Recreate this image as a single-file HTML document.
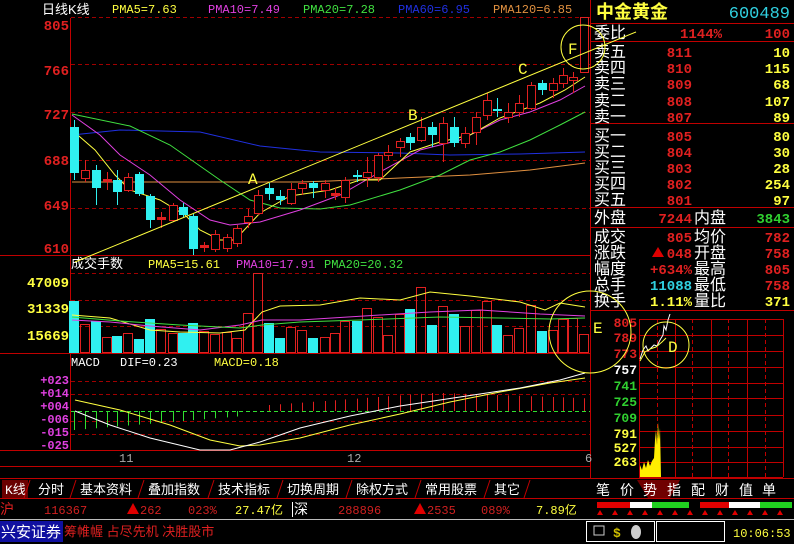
<!DOCTYPE html>
<html><head><meta charset="utf-8">
<style>
html,body{margin:0;padding:0;background:#000;}
body{width:794px;height:544px;overflow:hidden;position:relative;}
svg{position:absolute;left:0;top:0;}
text{font-family:"Liberation Mono","Noto Sans CJK SC",monospace;}
.cn{font-family:"Liberation Sans","Noto Sans CJK SC",sans-serif;}
</style></head><body>
<svg id="s" width="794" height="544" viewBox="0 0 794 544" xmlns="http://www.w3.org/2000/svg">
<rect width="794" height="544" fill="#000"/>
<g stroke="#c00000" stroke-width="1" fill="none">
<line x1="70.5" y1="18" x2="70.5" y2="451"/>
<line x1="590.5" y1="0" x2="590.5" y2="478"/>
<line x1="0" y1="255.5" x2="590" y2="255.5"/>
<line x1="0" y1="353.5" x2="590" y2="353.5"/>
<line x1="0" y1="450.5" x2="590" y2="450.5"/>
<line x1="0" y1="466.5" x2="590" y2="466.5"/>
<line x1="0" y1="478.5" x2="794" y2="478.5"/>
<line x1="0" y1="498.5" x2="794" y2="498.5"/>
</g>
<g stroke="#a00000" stroke-dasharray="4,3" stroke-width="1">
<line x1="71" y1="17.5" x2="590" y2="17.5"/>
<line x1="71" y1="64.5" x2="590" y2="64.5"/>
<line x1="71" y1="112.5" x2="590" y2="112.5"/>
<line x1="71" y1="160.5" x2="590" y2="160.5"/>
<line x1="71" y1="208.5" x2="590" y2="208.5"/>
<line x1="71" y1="273.5" x2="590" y2="273.5"/>
<line x1="71" y1="300.5" x2="590" y2="300.5"/>
<line x1="71" y1="326.5" x2="590" y2="326.5"/>
<line x1="71" y1="381.5" x2="590" y2="381.5"/>
<line x1="71" y1="394.5" x2="590" y2="394.5"/>
<line x1="71" y1="421.5" x2="590" y2="421.5"/>
<line x1="71" y1="434.5" x2="590" y2="434.5"/>
</g>
<line x1="71" y1="411.5" x2="590" y2="411.5" stroke="#30e030" stroke-dasharray="4,3"/>
<text x="42" y="14" fill="#fff" font-size="13" class="cn">日线K线</text>
<text x="112" y="13" fill="#ffff40" font-size="12">PMA5=7.63</text>
<text x="208" y="13" fill="#e040e0" font-size="12">PMA10=7.49</text>
<text x="303" y="13" fill="#40e040" font-size="12">PMA20=7.28</text>
<text x="398" y="13" fill="#2030e0" font-size="12">PMA60=6.95</text>
<text x="493" y="13" fill="#e09040" font-size="12">PMA120=6.85</text>
<g fill="#e02020" font-size="14" font-weight="bold" text-anchor="end">
<text x="69" y="30">805</text><text x="69" y="75">766</text><text x="69" y="119">727</text>
<text x="69" y="165">688</text><text x="69" y="210">649</text><text x="69" y="253">610</text>
</g>
<g id="main"></g>
<text x="71" y="268" fill="#fff" font-size="13" class="cn">成交手数</text>
<text x="148" y="268" fill="#ffff40" font-size="12">PMA5=15.61</text>
<text x="236" y="268" fill="#e040e0" font-size="12">PMA10=17.91</text>
<text x="324" y="268" fill="#40e040" font-size="12">PMA20=20.32</text>
<g fill="#ffff40" font-size="14" font-weight="bold" text-anchor="end">
<text x="69" y="287">47009</text><text x="69" y="313">31339</text><text x="69" y="340">15669</text>
</g>
<text x="71" y="366" fill="#fff" font-size="12">MACD</text>
<text x="120" y="366" fill="#fff" font-size="12">DIF=0.23</text>
<text x="214" y="366" fill="#ffff40" font-size="12">MACD=0.18</text>
<g fill="#e040e0" font-size="12" font-weight="bold" text-anchor="end">
<text x="69" y="384">+023</text><text x="69" y="397">+014</text><text x="69" y="410">+004</text>
<text x="69" y="423">-006</text><text x="69" y="436">-015</text><text x="69" y="449">-025</text>
</g>
<text x="119" y="462" fill="#aaa" font-size="12">11</text>
<text x="347" y="462" fill="#aaa" font-size="12">12</text>
<text x="585" y="462" fill="#aaa" font-size="12">6</text>

<g stroke="#c00000" fill="none">
<line x1="590" y1="23.5" x2="794" y2="23.5"/><line x1="590" y1="41.5" x2="794" y2="41.5"/>
<line x1="590" y1="123.5" x2="794" y2="123.5"/><line x1="590" y1="207.5" x2="794" y2="207.5"/>
<line x1="590" y1="227.5" x2="794" y2="227.5"/><line x1="590" y1="310.5" x2="794" y2="310.5"/>
</g>
<text x="596" y="18" fill="#ffff40" font-size="18" font-weight="bold" class="cn">中金黄金</text>
<text x="790" y="18" fill="#30d0e0" font-size="17" text-anchor="end">600489</text>
<g id="rp" class="cn"></g>
<g stroke="#c00000" fill="none" id="mini"></g>
<g font-size="13" font-weight="bold" text-anchor="end">
<text x="637" y="327" fill="#e02020">805</text><text x="637" y="342" fill="#e02020">789</text><text x="637" y="358" fill="#e02020">773</text>
<text x="637" y="374" fill="#fff">757</text><text x="637" y="390" fill="#30d030">741</text><text x="637" y="406" fill="#30d030">725</text><text x="637" y="422" fill="#30d030">709</text>
<text x="637" y="438" fill="#ffff40">791</text><text x="637" y="452" fill="#ffff40">527</text><text x="637" y="466" fill="#ffff40">263</text>
</g>
<polyline fill="none" stroke="#fff" points="640,359 643,350 646,346 648,351 651,348 654,345 657,346 660,340 663,335 664,326 666,330 668,320 670,314" />
<polyline fill="none" stroke="#ffff40" points="640,361 645,352 650,349 656,347 662,342 666,338" />
<path fill="#ffee00" d="M640,477 L640,465 642,470 644,462 646,468 648,460 650,466 652,461 654,458 655,440 656,430 657,445 658,422 659,440 660,428 661,477 Z"/>
<g fill="none" stroke="#ffff40">
<circle cx="583" cy="47" r="22"/><circle cx="590" cy="332" r="41"/><circle cx="666" cy="345" r="23"/>
</g>
<line x1="75" y1="262" x2="636" y2="32" stroke="#ffff40"/>
<g fill="#ffff40" font-size="16" font-family="Liberation Serif,serif">
<text x="248" y="184">A</text><text x="408" y="120">B</text><text x="518" y="74">C</text>
<text x="568" y="54">F</text><text x="593" y="333">E</text><text x="668" y="352">D</text>
</g>
<rect x="2" y="480" width="26" height="18" fill="#6a0000"/>
<g fill="#fff" font-size="13" class="cn">
<text x="5" y="494">K线</text><text x="38" y="494">分时</text><text x="80" y="494">基本资料</text><text x="148" y="494">叠加指数</text>
<text x="218" y="494">技术指标</text><text x="287" y="494">切换周期</text><text x="356" y="494">除权方式</text><text x="425" y="494">常用股票</text><text x="494" y="494">其它</text>
</g>
<g stroke="#c00000"><line x1="30" y1="480" x2="24" y2="498"/><line x1="76" y1="480" x2="70" y2="498"/><line x1="144" y1="480" x2="138" y2="498"/><line x1="214" y1="480" x2="208" y2="498"/><line x1="283" y1="480" x2="277" y2="498"/><line x1="352" y1="480" x2="346" y2="498"/><line x1="421" y1="480" x2="415" y2="498"/><line x1="490" y1="480" x2="484" y2="498"/><line x1="530" y1="480" x2="524" y2="498"/></g>
<path d="M637,480 L648,498 L670,498 L680,480Z" fill="#700000"/>
<g fill="#fff" font-size="14" class="cn">
<text x="596" y="495">笔</text><text x="620" y="495">价</text><text x="643" y="495">势</text><text x="667" y="495">指</text><text x="691" y="495">配</text><text x="715" y="495">财</text><text x="739" y="495">值</text><text x="762" y="495">单</text>
</g>
<text x="0" y="514" fill="#e02020" font-size="14" class="cn">沪</text>
<text x="44" y="514" fill="#d02020" font-size="12">116367</text>
<path d="M127,514 L133,503 L139,514Z" fill="#e00000"/>
<text x="140" y="514" fill="#d02020" font-size="12">262</text>
<text x="188" y="514" fill="#d02020" font-size="12">023%</text>
<text x="235" y="514" fill="#ffff40" font-size="12">27.47亿</text>
<line x1="292.5" y1="502" x2="292.5" y2="517" stroke="#fff"/>
<text x="294" y="514" fill="#fff" font-size="14" class="cn">深</text>
<text x="338" y="514" fill="#d02020" font-size="12">288896</text>
<path d="M414,514 L420,503 L426,514Z" fill="#e00000"/>
<text x="427" y="514" fill="#d02020" font-size="12">2535</text>
<text x="481" y="514" fill="#d02020" font-size="12">089%</text>
<text x="536" y="514" fill="#ffff40" font-size="12">7.89亿</text>
<rect x="597" y="502" width="92" height="6" fill="#fff"/><rect x="597" y="502" width="33" height="6" fill="#e00000"/><rect x="652" y="502" width="37" height="6" fill="#20d020"/>
<rect x="700" y="502" width="92" height="6" fill="#fff"/><rect x="700" y="502" width="29" height="6" fill="#e00000"/><rect x="760" y="502" width="32" height="6" fill="#20d020"/>
<g fill="#e00000" id="tri"></g>
<line x1="0" y1="519.5" x2="794" y2="519.5" stroke="#bbb"/>
<rect x="0" y="521" width="63" height="21" fill="#1010a0"/>
<text x="1" y="537" fill="#fff" font-size="15" class="cn">兴安证券</text>
<text x="64" y="536" fill="#e02020" font-size="13" class="cn">筹帷幄 占尽先机 决胜股市</text>
<rect x="586.5" y="521.5" width="68" height="20" fill="none" stroke="#fff"/>
<line x1="654.5" y1="521" x2="654.5" y2="542" stroke="#fff"/>
<rect x="656.5" y="521.5" width="68" height="20" fill="none" stroke="#fff"/>
<rect x="594" y="526" width="10" height="9" fill="none" stroke="#ccc"/>
<text x="613" y="537" fill="#d0c000" font-size="13" font-weight="bold">$</text>
<ellipse cx="636" cy="532" rx="5" ry="7" fill="#ccc"/>
<text x="733" y="537" fill="#ffff40" font-size="12">10:06:53</text>
</svg>
<script>
var NS="http://www.w3.org/2000/svg";
function el(p,t,a){var e=document.createElementNS(NS,t);for(var k in a)e.setAttribute(k,a[k]);p.appendChild(e);return e;}
var m=document.getElementById('main');
function pl(pts,c){el(m,'polyline',{points:pts,fill:'none',stroke:c,'stroke-width':1});}
pl("72,135 120,130 200,132 260,146 320,152 400,153 450,155 520,154 585,152","#2030e0");
pl("72,182 300,182 330,181 400,178 470,175 530,170 585,163","#e09040");
pl("72,114 130,126 170,145 220,180 250,200 280,208 320,209 350,205 400,190 440,175 470,160 500,152 530,140 560,125 585,112","#40e040");
pl("72,115 100,135 120,155 150,175 180,200 210,220 230,225 260,222 300,210 340,195 380,172 420,150 460,140 500,120 530,112 560,100 585,86","#e040e0");
pl("72,130 95,150 115,175 130,190 160,200 185,215 200,230 220,240 235,240 260,213 290,196 330,190 360,180 380,180 410,152 440,142 470,135 500,118 540,103 565,90 585,77","#ffff40");
var C=[[74,127,173,120,180,0],[85,170,178,160,182,1],[96,170,188,165,205,0],[107,179,181,172,190,1],[117,180,192,170,205,0],[128,177,190,173,192,1],[139,174,194,172,196,0],[150,196,220,194,228,0],[161,217,219,212,228,1],[173,205,220,203,222,1],[183,207,215,203,217,0],[193,216,249,214,255,0],[204,245,247,242,252,1],[215,234,249,230,252,1],[227,237,248,234,252,1],[237,228,243,225,247,1],[248,216,222,209,228,1],[258,195,213,190,215,1],[269,188,194,183,200,0],[280,196,200,190,205,0],[291,189,203,183,205,1],[302,183,188,180,195,1],[313,183,188,181,198,0],[325,183,190,180,198,1],[335,193,195,188,200,1],[345,180,197,177,203,1],[357,175,177,170,182,0],[367,172,177,157,187,1],[378,155,177,153,182,1],[388,152,155,145,160,1],[400,141,147,138,157,1],[410,137,143,133,150,0],[421,127,140,117,142,1],[432,127,135,122,147,0],[443,123,143,117,162,1],[454,127,143,117,147,0],[465,133,143,127,148,1],[476,117,132,112,145,1],[487,100,115,93,120,1],[497,109,111,98,117,0],[508,112,117,103,123,1],[519,103,112,95,117,1],[531,85,108,82,110,1],[542,83,90,80,95,0],[553,83,90,78,98,1],[563,75,83,68,88,1],[573,77,80,72,93,1],[584,17,72,17,72,1]];
C.forEach(function(c){var x=c[0],col=c[5]?'#e02020':'#30f0f0';
el(m,'line',{x1:x+.5,y1:c[3],x2:x+.5,y2:c[4],stroke:col});
if(c[5])el(m,'rect',{x:x-3.5,y:c[1]+.5,width:8,height:Math.max(1,c[2]-c[1]),fill:c[2]-c[1]<3?col:'#000',stroke:col});
else el(m,'rect',{x:x-4,y:c[1],width:9,height:Math.max(2,c[2]-c[1]),fill:col});});
var V=[301,324,321,337,336,333,339,319,329,333,333,323,331,334,332,338,313,273,323,338,327,330,338,337,333,321,321,308,317,335,314,309,287,325,306,314,326,310,301,325,335,328,305,331,330,319,318,334];
V.forEach(function(v,i){var x=C[i][0],up=C[i][5];
if(up)el(m,'rect',{x:x-4.5,y:v+.5,width:9,height:352-v,fill:'none',stroke:'#e02020'});
else el(m,'rect',{x:x-5,y:v,width:10,height:353-v,fill:'#30f0f0'});});
pl("72,315 110,318 150,330 180,332 220,333 245,330 262,312 280,306 320,305 360,298 400,300 430,292 470,296 520,302 545,310 560,303 585,307","#ffff40");
pl("72,320 110,322 150,326 200,330 240,325 262,320 300,320 380,315 430,312 480,310 540,314 585,316","#e040e0");
pl("72,317 120,321 180,325 240,328 262,325 300,322 360,320 440,317 500,318 550,319 585,318","#40e040");
C.forEach(function(c,i){var x=c[0]+.5;
if(i<16){var h=19-i*0.9;el(m,'line',{x1:x,y1:411,x2:x,y2:411+h,stroke:'#30e030'});}
else if(i>17){var h2=Math.min(18,6+(i-18)*0.8);if(i>34)h2=18-(i-34)*0.4;el(m,'line',{x1:x,y1:411,x2:x,y2:411-h2,stroke:'#e02020'});}});
pl("75,400 120,410 170,425 210,440 240,446 260,445 300,438 350,425 400,414 450,402 500,392 550,383 585,378","#ffff40");
pl("75,411 110,425 150,438 200,450 230,450 260,442 300,428 350,416 400,406 460,397 520,388 560,380 585,373","#fff");
var rp=document.getElementById('rp');
function t(x,y,s,c,a,f,b){var e=el(rp,'text',{x:x,y:y,fill:c,'text-anchor':a||'start','font-size':f||16});if(b){e.setAttribute('font-weight','bold');e.setAttribute('style','font-family:"Liberation Mono",monospace');}e.textContent=s;}
t(594,38,'委比','#fff');t(680,38,'1144%','#e02020','start',14,1);t(790,38,'100','#e02020','end',14,1);
var sl=[['卖五',811,10],['卖四',810,115],['卖三',809,68],['卖二',808,107],['卖一',807,89],['买一',805,80],['买二',804,30],['买三',803,28],['买四',802,254],['买五',801,97]];
var ys=[57,73,89,106,122,141,157,173,189,205];
sl.forEach(function(r,i){t(594,ys[i],r[0],'#fff');t(692,ys[i],r[1],'#e02020','end',14,1);t(790,ys[i],r[2],'#ffff40','end',14,1);});
t(594,223,'外盘','#fff');t(692,223,'7244','#e02020','end',14,1);t(694,223,'内盘','#fff');t(790,223,'3843','#30d030','end',14,1);
var rr=[['成交','805','#e02020','均价','782','#e02020'],['涨跌','048','#e02020','开盘','758','#e02020'],['幅度','+634%','#e02020','最高','805','#e02020'],['总手','11088','#30d0e0','最低','758','#e02020'],['换手','1.11%','#ffff40','量比','371','#ffff40']];
rr.forEach(function(r,i){var y=242+i*16;t(594,y,r[0],'#fff');t(692,y,r[1],r[2],'end',14,1);t(694,y,r[3],'#fff');t(790,y,r[4],r[5],'end',14,1);});
el(rp,'path',{d:'M652,257 L658,247 L664,257Z',fill:'#e00000'});
var mini=document.getElementById('mini');
[639,657,675,692,711,728,747,765,783].forEach(function(x,i){el(mini,'line',{x1:x+.5,y1:319,x2:x+.5,y2:477,'stroke-dasharray':(i%2)?'4,3':''});});
[319,335,351,367,383,398,415,431,447,462,477].forEach(function(y){el(mini,'line',{x1:639,y1:y+.5,x2:783,y2:y+.5});});
var tri=document.getElementById('tri');
[600,615,630,645,660,675,690,705,720,735,750,765,780].forEach(function(x){el(tri,'path',{d:'M'+(x-3)+',515 L'+x+',510 L'+(x+3)+',515Z'});});
</script>
</body></html>
